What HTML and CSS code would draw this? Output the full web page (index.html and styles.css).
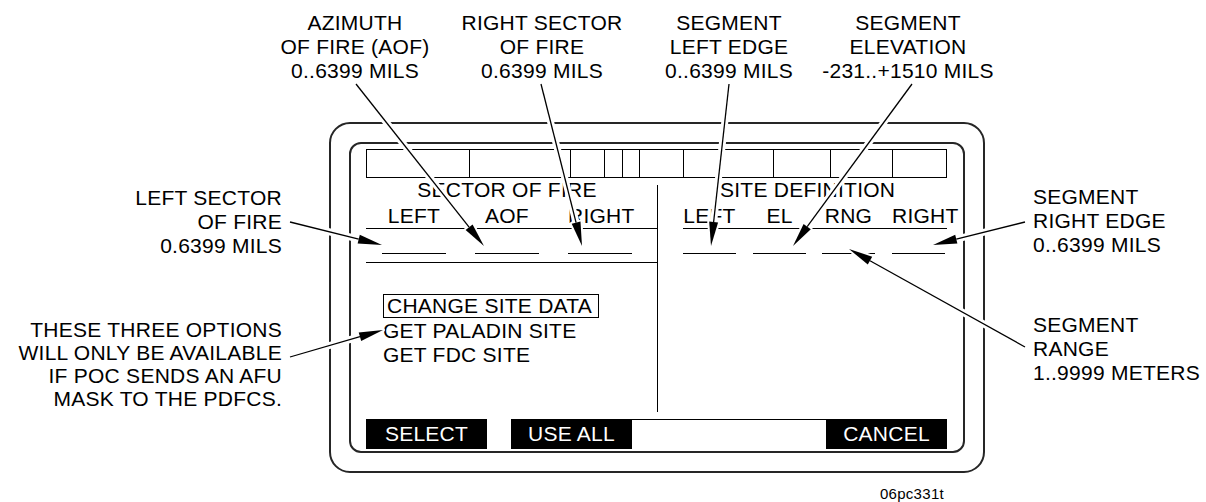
FILE: index.html
```html
<!DOCTYPE html>
<html lang="en">
<head>
<meta charset="utf-8">
<title>Site definition screen</title>
<link rel="stylesheet" href="styles.css">
</head>
<body>
<div class="page">
  <div class="top-notes">
    <div class="note note-aof">AZIMUTH<br>OF FIRE (AOF)<br>0..6399 MILS</div>
    <div class="note note-rsf">RIGHT SECTOR<br>OF FIRE<br>0.6399 MILS</div>
    <div class="note note-sle">SEGMENT<br>LEFT EDGE<br>0..6399 MILS</div>
    <div class="note note-sel">SEGMENT<br>ELEVATION<br>-231..+1510 MILS</div>
  </div>

  <div class="left-notes">
    <div class="note">LEFT SECTOR<br>OF FIRE<br>0.6399 MILS</div>
    <div class="note note-options">THESE THREE OPTIONS<br>WILL ONLY BE AVAILABLE<br>IF POC SENDS AN AFU<br>MASK TO THE PDFCS.</div>
  </div>

  <div class="device">
    <div class="screen">
      <div class="status-bar">
        <span></span><span></span><span></span><span></span><span></span>
        <span></span><span></span><span></span><span></span><span></span>
      </div>
      <div class="panels">
        <div class="panel panel-sector">
          <div class="panel-title sector-title">SECTOR OF FIRE</div>
          <div class="col-heads sector-cols"><span>LEFT</span><span>AOF</span><span>RIGHT</span></div>
          <div class="fields sector-cols"><span></span><span></span><span></span></div>
          <div class="rule"></div>
          <ul class="options">
            <li class="selected">CHANGE SITE DATA</li>
            <li>GET PALADIN SITE</li>
            <li>GET FDC SITE</li>
          </ul>
        </div>
        <div class="divider"></div>
        <div class="panel panel-site">
          <div class="panel-title site-title">SITE DEFINITION</div>
          <div class="col-heads site-cols"><span>LEFT</span><span>EL</span><span>RNG</span><span>RIGHT</span></div>
          <div class="fields site-cols"><span></span><span></span><span></span><span></span></div>
        </div>
      </div>
      <div class="softkeys">
        <div class="key">SELECT</div>
        <div class="key-gap"></div>
        <div class="key">USE ALL</div>
        <div class="key-spacer"></div>
        <div class="key">CANCEL</div>
      </div>
    </div>
  </div>

  <div class="right-notes">
    <div class="note">SEGMENT<br>RIGHT EDGE<br>0..6399 MILS</div>
    <div class="note note-range">SEGMENT<br>RANGE<br>1..9999 METERS</div>
  </div>

  <div class="fig-id">06pc331t</div>

  <svg class="arrows" width="1206" height="502" viewBox="0 0 1206 502" aria-hidden="true">
    <g class="halo">
      <line x1="290" y1="222" x2="358.7" y2="239.2"/>
      <line x1="356" y1="84" x2="469.1" y2="227.2"/>
      <line x1="541" y1="84" x2="576.1" y2="222.7"/>
      <line x1="729" y1="84" x2="713.6" y2="222.2"/>
      <line x1="912" y1="84" x2="807.2" y2="226.7"/>
      <line x1="1025" y1="222" x2="956.3" y2="239.2"/>
      <line x1="1025" y1="347" x2="870" y2="260.7"/>
      <line x1="290" y1="357" x2="360" y2="336.7"/>
    </g>
    <g class="head-halo">
      <polygon points="382,245 357.6,243.6 359.8,234.8"/>
      <polygon points="484,246 465.6,230 472.6,224.4"/>
      <polygon points="582,246 571.7,223.8 580.5,221.6"/>
      <polygon points="711,246 709.2,221.6 718.1,222.6"/>
      <polygon points="793,246 803.6,224 810.8,229.3"/>
      <polygon points="933,245 955.2,234.8 957.4,243.6"/>
      <polygon points="849,249 872.2,256.7 867.8,264.6"/>
      <polygon points="383,330 361.2,341 358.7,332.4"/>
    </g>
    <g class="shaft">
      <line x1="290" y1="222" x2="358.7" y2="239.2"/>
      <line x1="356" y1="84" x2="469.1" y2="227.2"/>
      <line x1="541" y1="84" x2="576.1" y2="222.7"/>
      <line x1="729" y1="84" x2="713.6" y2="222.2"/>
      <line x1="912" y1="84" x2="807.2" y2="226.7"/>
      <line x1="1025" y1="222" x2="956.3" y2="239.2"/>
      <line x1="1025" y1="347" x2="870" y2="260.7"/>
      <line x1="290" y1="357" x2="360" y2="336.7"/>
    </g>
    <g class="head">
      <polygon points="382,245 357.6,243.6 359.8,234.8"/>
      <polygon points="484,246 465.6,230 472.6,224.4"/>
      <polygon points="582,246 571.7,223.8 580.5,221.6"/>
      <polygon points="711,246 709.2,221.6 718.1,222.6"/>
      <polygon points="793,246 803.6,224 810.8,229.3"/>
      <polygon points="933,245 955.2,234.8 957.4,243.6"/>
      <polygon points="849,249 872.2,256.7 867.8,264.6"/>
      <polygon points="383,330 361.2,341 358.7,332.4"/>
    </g>
  </svg>
</div>
</body>
</html>
```

FILE: styles.css
```css
* {
  box-sizing: border-box;
}

html, body {
  margin: 0;
  padding: 0;
  background: #fff;
}

body {
  font-family: "Liberation Sans", Arial, Helvetica, sans-serif;
  font-size: 21px;
  letter-spacing: 0.25px;
  color: #000;
}

.page {
  position: relative;
  width: 1206px;
  height: 502px;
  display: grid;
  grid-template-columns: 329px 656px 221px;
  grid-template-rows: 122px 351px 29px;
  overflow: hidden;
}

.note {
  line-height: 24px;
  white-space: nowrap;
}

/* ---------- callouts above ---------- */
.top-notes {
  grid-column: 1 / -1;
  grid-row: 1;
  display: flex;
  padding-top: 11px;
}

.top-notes .note {
  width: 176px;
  flex: none;
  text-align: center;
}

.note-aof { margin-left: 267px; }
.note-rsf { margin-left: 11px; }
.note-sle { margin-left: 11px; }
.note-sel { margin-left: 3px; }

/* ---------- callouts left ---------- */
.left-notes {
  grid-column: 1;
  grid-row: 2;
  display: flex;
  flex-direction: column;
  align-items: flex-end;
  text-align: right;
  padding: 64px 47px 0 0;
}

.note-options {
  margin-top: 60px;
  line-height: 23px;
}

/* ---------- callouts right ---------- */
.right-notes {
  grid-column: 3;
  grid-row: 2;
  display: flex;
  flex-direction: column;
  padding: 63px 0 0 48px;
}

.note-range {
  margin-top: 56px;
}

/* ---------- device frame ---------- */
.device {
  grid-column: 2;
  grid-row: 2;
  border: 2px solid #262626;
  border-radius: 21px;
  padding: 18px;
}

.screen {
  height: 100%;
  border: 2px solid #262626;
  border-radius: 12px;
  padding: 5px 16px 0 15px;
  display: flex;
  flex-direction: column;
}

.status-bar {
  flex: none;
  height: 29px;
  border: 1px solid #000;
  display: grid;
  grid-template-columns: 103px 101px 34px 18px 17px 44px 90px 57px 62px 53px;
}

.status-bar span {
  border-right: 1px solid #000;
}

.status-bar span:last-child {
  border-right: 0;
}

.panels {
  flex: none;
  height: 241px;
  display: flex;
}

.panel-sector {
  width: 291px;
  flex: none;
}

.divider {
  width: 1px;
  flex: none;
  background: #000;
  margin: 7px 0;
}

.panel-site {
  flex: 1;
}

.panel-title {
  height: 24px;
  line-height: 24px;
  white-space: nowrap;
}

.sector-title {
  margin-left: 16px;
  width: 250px;
  text-align: center;
}

.site-title {
  padding-left: 62px;
}

.col-heads {
  display: grid;
  margin-top: 2px;
  height: 25px;
  line-height: 24px;
  border-bottom: 1px solid #000;
  text-align: center;
  white-space: nowrap;
}

.sector-cols {
  grid-template-columns: 64px 64px 64px;
  column-gap: 29px;
  padding-left: 16px;
}

.site-cols {
  grid-template-columns: 70px 69px 70px 53px;
  margin-left: 25px;
}

.site-cols span {
  width: 53px;
}

.fields {
  display: grid;
  margin-top: 24px;
  height: 1px;
}

.fields span {
  height: 1px;
  background: #000;
}

.rule {
  margin-top: 8px;
  height: 1px;
  background: #000;
}

.options {
  list-style: none;
  margin: 31px 0 0 17px;
  padding: 0;
}

.options li {
  line-height: 24px;
  white-space: nowrap;
}

.options li.selected {
  width: fit-content;
  border: 1px solid #000;
  line-height: 22px;
  padding: 0 6px 0 3px;
  margin-bottom: 1px;
}

/* ---------- soft keys ---------- */
.softkeys {
  flex: none;
  height: 30px;
  display: flex;
}

.key {
  width: 121px;
  flex: none;
  background: #000;
  color: #fff;
  text-align: center;
  line-height: 30px;
}

.key-gap {
  width: 24px;
  flex: none;
}

.key-spacer {
  width: 194px;
  flex: none;
  border-top: 1px solid #000;
}

/* ---------- figure id ---------- */
.fig-id {
  grid-column: 2;
  grid-row: 3;
  text-align: right;
  padding: 12px 41px 0 0;
  font-size: 15px;
  line-height: 18px;
  letter-spacing: 0.3px;
}

/* ---------- leader arrows ---------- */
.arrows {
  position: absolute;
  left: 0;
  top: 0;
  pointer-events: none;
}

.arrows .halo line {
  stroke: #fff;
  stroke-width: 7;
}

.arrows .head-halo polygon {
  fill: #fff;
  stroke: #fff;
  stroke-width: 4;
  stroke-linejoin: round;
}

.arrows .shaft line {
  stroke: #000;
  stroke-width: 1.3;
}

.arrows .head polygon {
  fill: #000;
}
```
